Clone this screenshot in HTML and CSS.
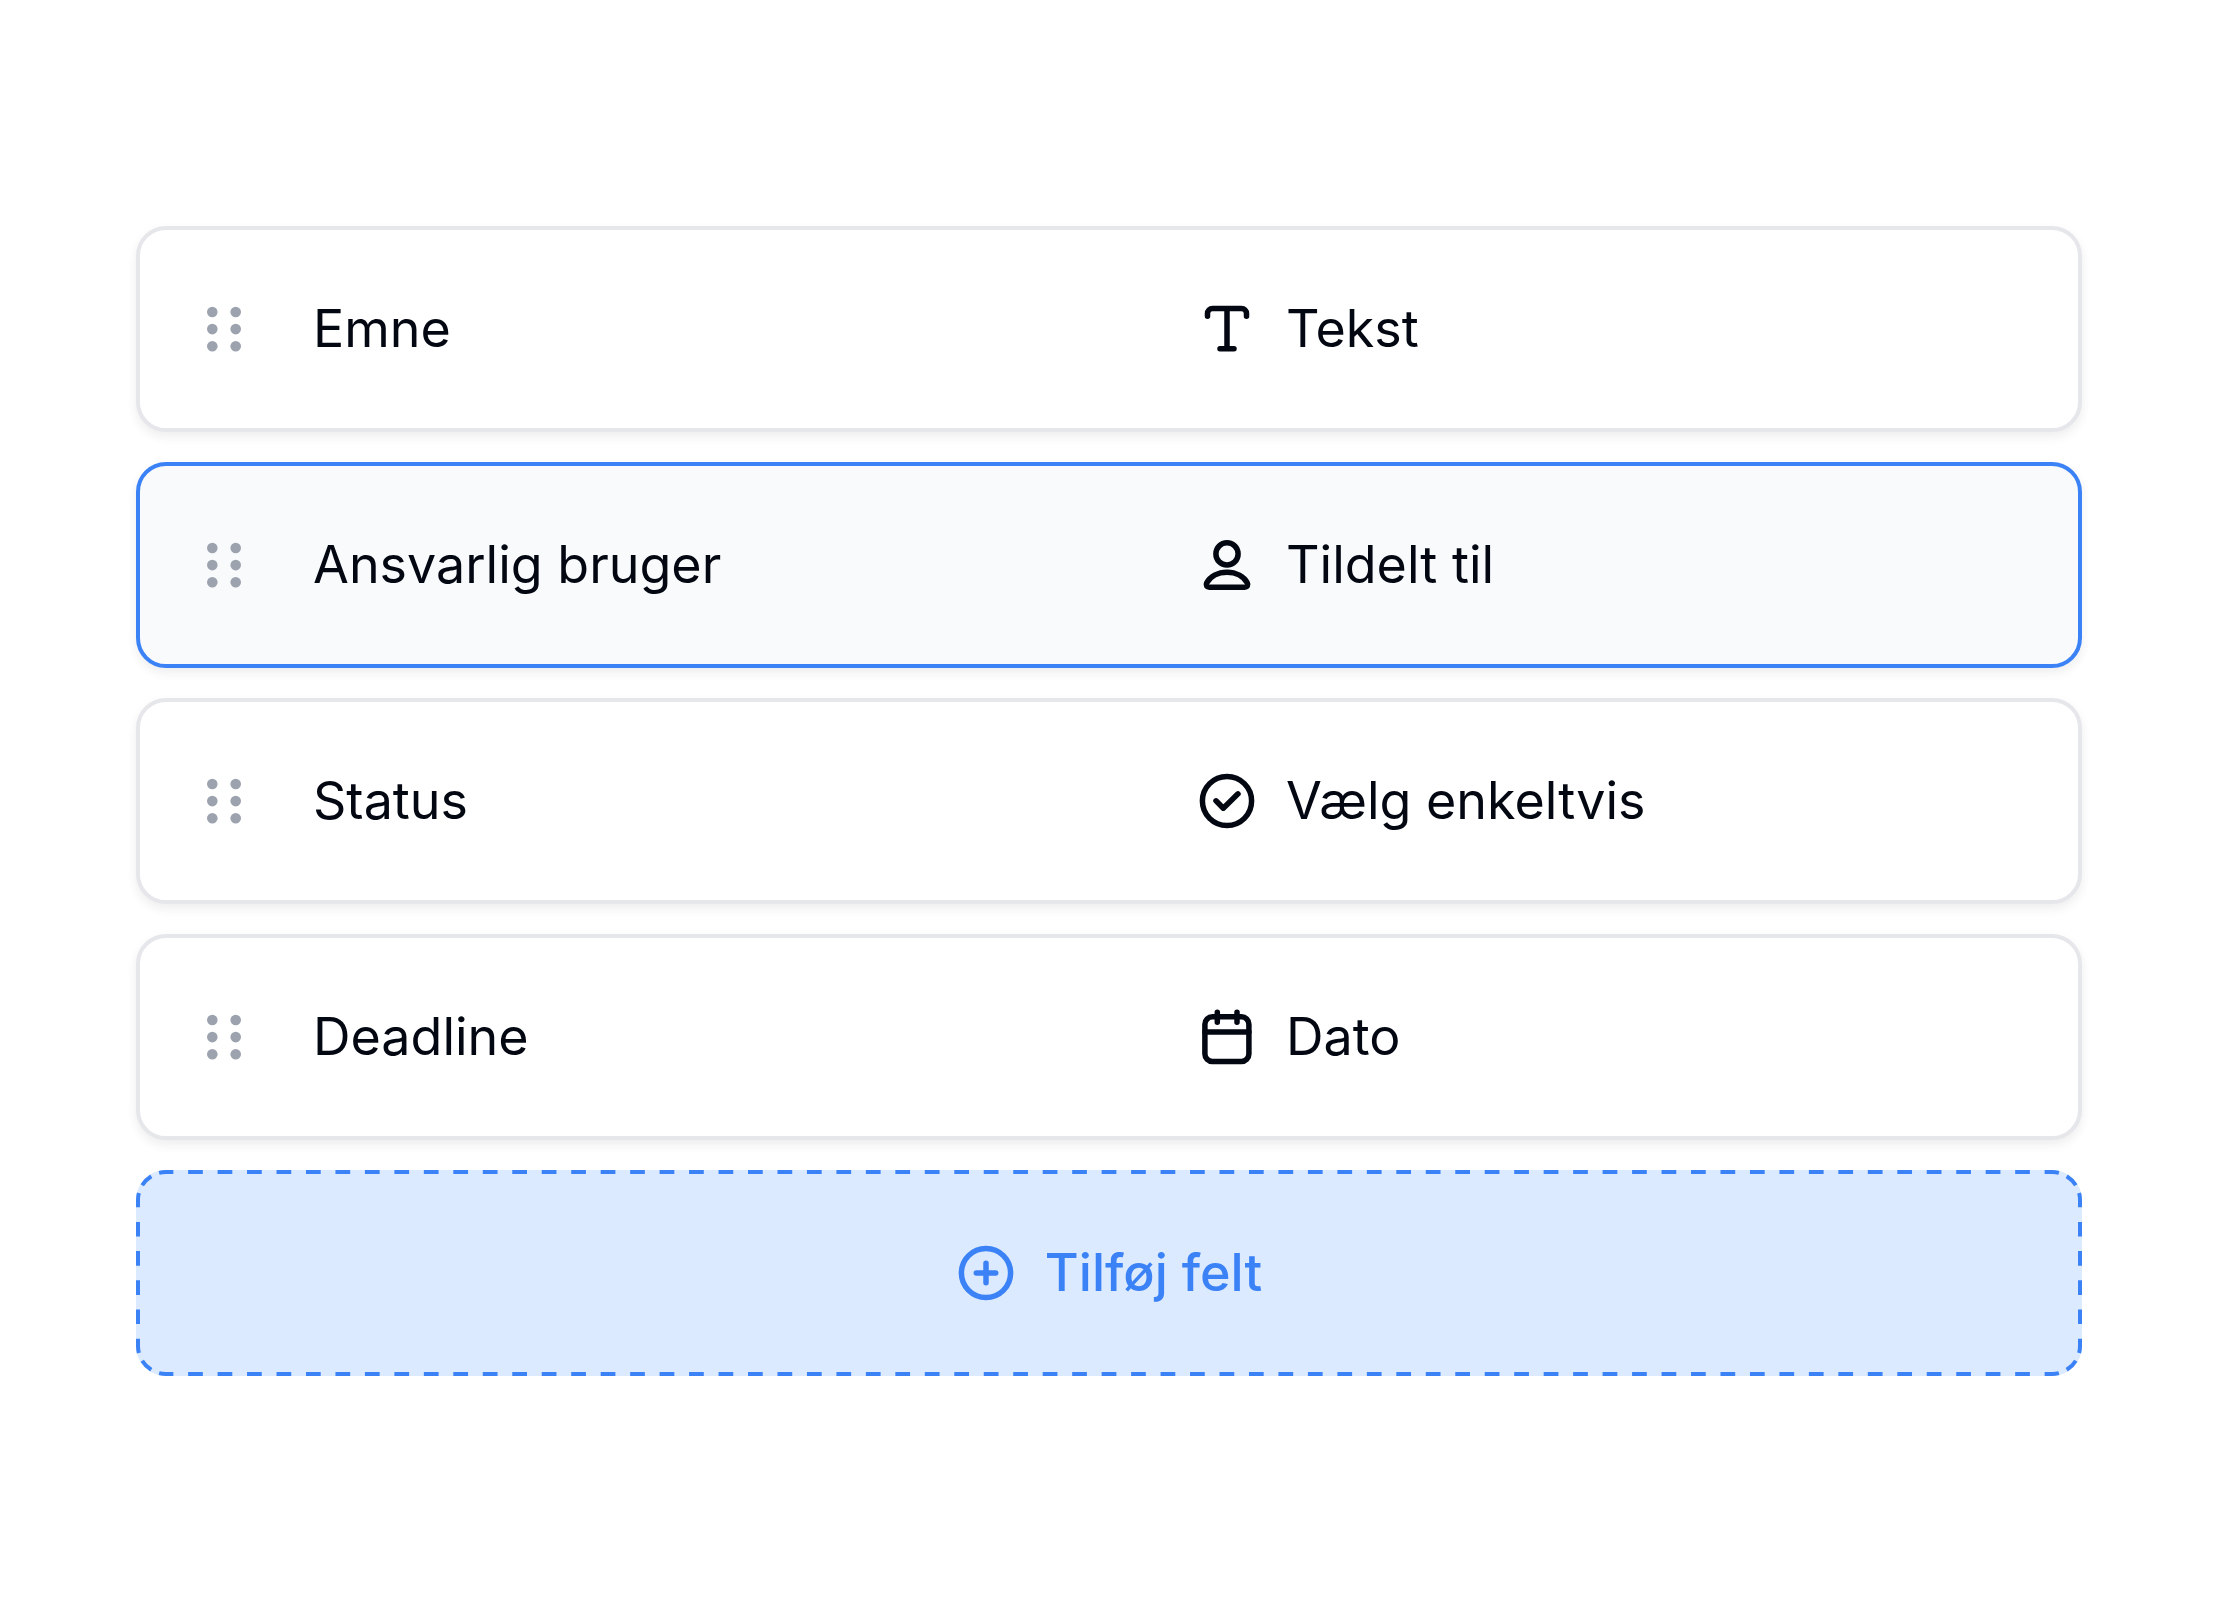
FILE: index.html
```html
<!DOCTYPE html>
<html lang="da">
<head>
<meta charset="utf-8">
<meta name="viewport" content="width=device-width, initial-scale=1">
<title>Felter</title>
<link rel="stylesheet" href="styles.css">
</head>
<body>
<svg class="defs" aria-hidden="true">
  <symbol id="grip" viewBox="0 0 60 60">
    <g fill="currentColor">
      <circle cx="18.3" cy="13" r="5.3"/><circle cx="41.7" cy="13" r="5.3"/>
      <circle cx="18.3" cy="30.1" r="5.3"/><circle cx="41.7" cy="30.1" r="5.3"/>
      <circle cx="18.3" cy="47.2" r="5.3"/><circle cx="41.7" cy="47.2" r="5.3"/>
    </g>
  </symbol>
  <path id="corner" class="dash" d="M2 30A28 28 0 0 1 30 2" pathLength="44" stroke-dasharray="7 8.5 13 8.5 7 9"/>
</svg>
<main class="page">
  <ul class="fields">
    <li class="field">
      <button class="handle" type="button" aria-label="Flyt Emne"><svg class="icon"><use href="#grip"/></svg></button>
      <span class="name">Emne</span>
      <span class="type">
        <svg class="icon" viewBox="0 0 60 60" aria-hidden="true"><path d="M10.5 17.2V14.5a5 5 0 0 1 5-5h29a5 5 0 0 1 5 5V17.2M30 9.5V49.8M23 49.8H37"/></svg>
        Tekst
      </span>
    </li>
    <li class="field field-active">
      <button class="handle" type="button" aria-label="Flyt Ansvarlig bruger"><svg class="icon"><use href="#grip"/></svg></button>
      <span class="name">Ansvarlig bruger</span>
      <span class="type">
        <svg class="icon" viewBox="0 0 60 60" aria-hidden="true"><circle cx="30" cy="18.9" r="11.1"/><path d="M30 37.2C20.600 37.200 13.200 41.800 9.700 47.800C8.500 50 9.800 52.200 12.200 52.200H47.800C50.200 52.200 51.500 50 50.300 47.800C46.800 41.800 39.400 37.200 30 37.200Z"/></svg>
        Tildelt til
      </span>
    </li>
    <li class="field">
      <button class="handle" type="button" aria-label="Flyt Status"><svg class="icon"><use href="#grip"/></svg></button>
      <span class="name">Status</span>
      <span class="type">
        <svg class="icon" viewBox="0 0 60 60" aria-hidden="true"><circle cx="30" cy="30" r="24.6"/><path d="M19 29.800L26.300 37.200L41 22.800"/></svg>
        Vælg enkeltvis
      </span>
    </li>
    <li class="field">
      <button class="handle" type="button" aria-label="Flyt Deadline"><svg class="icon"><use href="#grip"/></svg></button>
      <span class="name">Deadline</span>
      <span class="type">
        <svg class="icon" viewBox="0 0 60 60" aria-hidden="true"><rect x="7.900" y="9.800" width="44" height="44.700" rx="7.500"/><path d="M7.900 25H51.900M20.300 5.200V15.200M40 5.200V15.200"/></svg>
        Dato
      </span>
    </li>
  </ul>
  <button class="add" type="button">
    <svg class="outline" aria-hidden="true">
      <g transform="translate(30 0)">
        <svg class="run-x"><line class="dash" x1="0" y1="2" x2="100%" y2="2" pathLength="1280" stroke-dasharray="10 10" stroke-dashoffset="5"/></svg>
        <svg class="run-x" y="100%"><line class="dash" x1="0" y1="-2" x2="100%" y2="-2" pathLength="1280" stroke-dasharray="10 10" stroke-dashoffset="5"/></svg>
      </g>
      <g transform="translate(0 30)">
        <svg class="run-y"><line class="dash" x1="2" y1="0" x2="2" y2="100%" pathLength="100" stroke-dasharray="10 10" stroke-dashoffset="5"/></svg>
        <svg class="run-y" x="100%"><line class="dash" x1="-2" y1="0" x2="-2" y2="100%" pathLength="100" stroke-dasharray="10 10" stroke-dashoffset="5"/></svg>
      </g>
      <use href="#corner"/>
      <svg x="100%"><use href="#corner" transform="scale(-1 1)"/></svg>
      <svg y="100%"><use href="#corner" transform="scale(1 -1)"/></svg>
      <svg x="100%" y="100%"><use href="#corner" transform="scale(-1 -1)"/></svg>
    </svg>
    <svg class="icon" viewBox="0 0 60 60" aria-hidden="true"><circle cx="30" cy="30" r="24.6"/><path d="M20.300 30H39.700M30 20.300V39.700"/></svg>
    Tilføj felt
  </button>
</main>
</body>
</html>
```

FILE: styles.css
```css
*,
*::before {
  box-sizing: border-box;
}

body {
  margin: 0;
  background: #fff;
  color: #030712;
  font-family: Inter, "Liberation Sans", sans-serif;
  font-size: 52px;
  line-height: 76px;
}

.defs {
  position: absolute;
  width: 0;
  height: 0;
}

.page {
  display: flex;
  flex-direction: column;
  gap: 30px;
  padding: 226px 138px 226px 136px;
}

.fields {
  display: flex;
  flex-direction: column;
  gap: 30px;
  margin: 0;
  padding: 0;
  list-style: none;
}

.field {
  display: grid;
  grid-template-columns: auto 1fr 1fr;
  align-items: center;
  column-gap: 59px;
  padding: 61px 56px 61px 54px;
  border: 4px solid #e5e7eb;
  border-radius: 30px;
  background: #fff;
  box-shadow: 0 4px 11px rgba(0, 0, 0, 0.06), 0 7px 15px rgba(0, 0, 0, 0.02);
}

.field-active {
  border-color: #3b82f6;
  background: #f9fafc;
}

.handle {
  display: flex;
  padding: 0;
  border: 0;
  background: none;
  color: #9ca3af;
  cursor: grab;
}

.type {
  display: flex;
  align-items: center;
  gap: 29px;
}

.icon {
  flex: none;
  width: 60px;
  height: 60px;
  fill: none;
  stroke: currentColor;
  stroke-width: 5.5px;
  stroke-linecap: round;
  stroke-linejoin: round;
}

.handle .icon {
  stroke: none;
}

.add {
  position: relative;
  display: flex;
  align-items: center;
  justify-content: center;
  gap: 29px;
  padding: 65px 58px;
  border: 0;
  border-radius: 30px;
  background: #dbeafe;
  color: #3b82f6;
  font: inherit;
  font-weight: 500;
  cursor: pointer;
}

.outline {
  position: absolute;
  inset: 0;
  width: 100%;
  height: 100%;
}

.outline svg {
  overflow: visible;
}

.run-x {
  width: calc(100% - 60px);
}

.run-y {
  height: calc(100% - 60px);
}

.dash {
  fill: none;
  stroke: #3b82f6;
  stroke-width: 4px;
}
```
